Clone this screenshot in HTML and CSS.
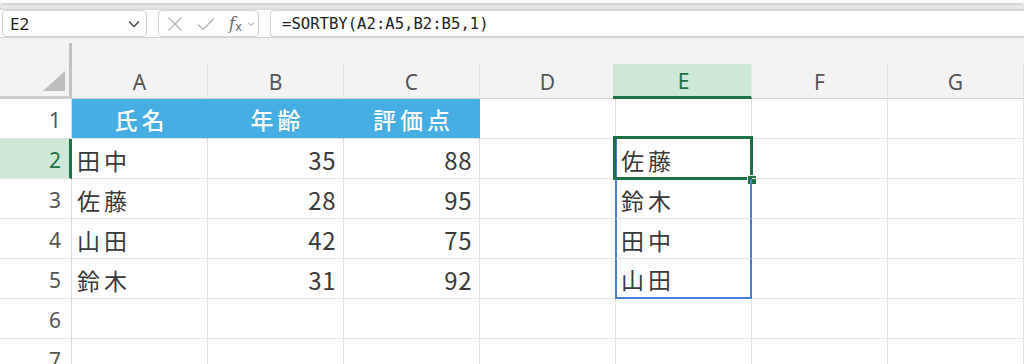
FILE: index.html
```html
<html lang="ja">
<head>
  <meta charset="UTF-8">
  <title>SORTBY</title>
  <link rel="stylesheet" href="styles.css">
</head>
<body>

  <div class="chrome-top"></div>
  <div class="chrome-band"></div>

  <div class="formula-bar">
    <div class="name-box">
      <span>E2</span>
      <svg width="12" height="8" viewBox="0 0 12 8"><path d="M1 1.5 L6 6.5 L11 1.5" fill="none" stroke="#444" stroke-width="1.4"/></svg>
    </div>
    <div class="fx-box">
      <svg width="16" height="16" viewBox="0 0 16 16"><path d="M1.5 1.5 L14.5 14.5 M14.5 1.5 L1.5 14.5" stroke="#b3b3b3" stroke-width="1.2"/></svg>
      <svg width="18" height="14" viewBox="0 0 18 14"><path d="M1 7.5 L6 12.5 L17 1.5" fill="none" stroke="#b3b3b3" stroke-width="1.2"/></svg>
      <span class="fx">f<sub>x</sub></span>
      <svg width="8" height="6" viewBox="0 0 8 6"><path d="M1 1.5 L4 4.5 L7 1.5" fill="none" stroke="#999" stroke-width="1"/></svg>
    </div>
    <div class="formula">=SORTBY(A2:A5,B2:B5,1)</div>
  </div>

  <div class="sheet-gap">
    <div class="gap-corner"></div>
  </div>

  <div class="sheet">
    <div class="corner"><span class="corner-tri"></span></div>
    <div class="ch">A</div>
    <div class="ch">B</div>
    <div class="ch">C</div>
    <div class="ch">D</div>
    <div class="ch ch-active">E</div>
    <div class="ch">F</div>
    <div class="ch">G</div>

    <div class="rh">1</div>
    <div class="cell head">氏名</div>
    <div class="cell head">年齢</div>
    <div class="cell head">評価点</div>
    <div class="cell"></div>
    <div class="cell"></div>
    <div class="cell"></div>
    <div class="cell"></div>

    <div class="rh rh-active">2</div>
    <div class="cell">田中</div>
    <div class="cell num">35</div>
    <div class="cell num">88</div>
    <div class="cell"></div>
    <div class="cell spill spill-top">佐藤<span class="select-box"><span class="fill-handle"></span></span></div>
    <div class="cell"></div>
    <div class="cell"></div>

    <div class="rh">3</div>
    <div class="cell">佐藤</div>
    <div class="cell num">28</div>
    <div class="cell num">95</div>
    <div class="cell"></div>
    <div class="cell spill">鈴木</div>
    <div class="cell"></div>
    <div class="cell"></div>

    <div class="rh">4</div>
    <div class="cell">山田</div>
    <div class="cell num">42</div>
    <div class="cell num">75</div>
    <div class="cell"></div>
    <div class="cell spill">田中</div>
    <div class="cell"></div>
    <div class="cell"></div>

    <div class="rh">5</div>
    <div class="cell">鈴木</div>
    <div class="cell num">31</div>
    <div class="cell num">92</div>
    <div class="cell"></div>
    <div class="cell spill spill-end">山田</div>
    <div class="cell"></div>
    <div class="cell"></div>

    <div class="rh">6</div>
    <div class="cell"></div>
    <div class="cell"></div>
    <div class="cell"></div>
    <div class="cell"></div>
    <div class="cell"></div>
    <div class="cell"></div>
    <div class="cell"></div>

    <div class="rh">7</div>
    <div class="cell"></div>
    <div class="cell"></div>
    <div class="cell"></div>
    <div class="cell"></div>
    <div class="cell"></div>
    <div class="cell"></div>
    <div class="cell"></div>
  </div>

</body>
</html>
```

FILE: styles.css
```css
body {
  margin: 0;
  padding: 0;
  width: 1024px;
  height: 364px;
  overflow: hidden;
  background: #fff;
  font-family: "Noto Sans", "Noto Sans CJK JP", sans-serif;
  color: #333;
}

.chrome-top {
  height: 3px;
  border-bottom: 1px solid #d4d4d4;
  border-radius: 0 0 6px 6px;
  background: #fff;
}

.chrome-band {
  height: 6px;
  background: linear-gradient(#dadada, #e8e8e8 50%, #d9d9d9);
}

.formula-bar {
  display: flex;
  align-items: flex-start;
  height: 27px;
  background: #fff;
  border-bottom: 1px solid #d6d6d6;
}

.name-box, .fx-box, .formula {
  box-sizing: border-box;
  height: 27px;
  border: 1px solid #d4d4d4;
  border-radius: 4px;
  background: #fff;
  display: flex;
  align-items: center;
}

.name-box {
  width: 145px;
  margin-left: 2px;
  padding: 0 6px 0 7px;
  justify-content: space-between;
  font-size: 17px;
  color: #222;
}

.fx-box {
  width: 101px;
  margin-left: 11px;
  padding-left: 8px;
}
.fx-box svg:nth-child(2) { margin-left: 14px; }
.fx {
  margin-left: 14px;
  font-family: "DejaVu Serif", serif;
  font-style: italic;
  font-size: 16px;
  color: #666;
}
.fx sub {
  font-size: 12px;
  vertical-align: -2px;
  font-family: "DejaVu Sans", sans-serif;
  font-style: normal;
}
.fx-box svg:last-child { margin-left: 5px; }

.formula {
  flex: 1;
  margin-left: 11px;
  border-right: none;
  border-radius: 4px 0 0 4px;
  padding-left: 11px;
  font-family: "DejaVu Sans Mono", monospace;
  font-size: 15.6px;
  color: #222;
}

.sheet-gap {
  height: 26px;
  padding-top: 5px;
  box-sizing: border-box;
  background: #f3f3f3;
}
.gap-corner {
  width: 69px;
  height: 21px;
  border-right: 3px solid #c2c2c2;
}

.sheet {
  display: grid;
  grid-template-columns: 72px repeat(7, 136px);
  grid-template-rows: 35px repeat(7, 40px);
}

.corner {
  position: relative;
  background: #f3f3f3;
  border-right: 3px solid #c2c2c2;
  border-bottom: 3px solid #cdcdcd;
}
.corner-tri {
  position: absolute;
  right: 4px;
  bottom: 5px;
  width: 0;
  height: 0;
  border-left: 22px solid transparent;
  border-bottom: 20px solid #bdbdbd;
}

.ch {
  background: #f3f3f3;
  border-right: 1px solid #e6e6e6;
  border-bottom: 1px solid #d2d2d2;
  display: flex;
  align-items: center;
  justify-content: center;
  font-size: 21px;
  color: #555;
  padding-top: 1px;
}
.ch-active {
  background: #cde8d7;
  color: #1e7145;
  border-bottom: 3px solid #1e7145;
  margin-left: -3px;
  padding-left: 3px;
}

.rh {
  border-right: 1px solid #dcdcdc;
  border-bottom: 1px solid #e4e4e4;
  display: flex;
  align-items: center;
  justify-content: flex-end;
  padding-right: 10px;
  font-size: 21px;
  color: #555;
  padding-top: 2px;
}
.rh-active {
  background: #cde8d7;
  color: #1e7145;
  border-right: 3px solid #1e7145;
  padding-right: 8px;
}

.cell {
  position: relative;
  border-right: 1px solid #e3e3e3;
  border-bottom: 1px solid #e3e3e3;
  display: flex;
  align-items: center;
  padding: 2px 0 0 5px;
  font-family: "Noto Sans CJK JP", sans-serif;
  font-size: 23px;
  letter-spacing: 4px;
  color: #3a3a3a;
  white-space: nowrap;
}
.num {
  justify-content: flex-end;
  padding: 2px 7px 0 0;
  font-size: 24px;
  letter-spacing: 0.5px;
}
.head {
  background: #46aee2;
  border-right-color: #46aee2;
  border-bottom-color: #e3e3e3;
  color: #fff;
  justify-content: center;
  font-weight: 500;
  padding: 0 0 0 4px;
}

.spill {
  border-left: 2px solid #4a7dd4;
  border-right: 2px solid #4a7dd4;
  margin-left: -1px;
  padding-left: 4px;
}
.spill-end {
  border-bottom: 2px solid #4a7dd4;
}

.select-box {
  position: absolute;
  left: -4px;
  top: -3px;
  right: -3px;
  bottom: -2px;
  border: 3px solid #1e7145;
}
.fill-handle {
  position: absolute;
  right: -7px;
  bottom: -8px;
  width: 8px;
  height: 8px;
  background: #1e7145;
  border: 1px solid #fff;
}
```
